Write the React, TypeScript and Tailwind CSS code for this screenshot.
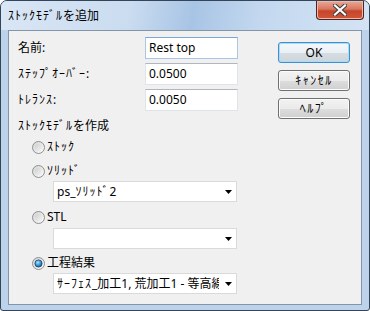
import React from "react";

const font = "font-['Noto_Sans','Noto_Sans_CJK_JP',sans-serif]";

// half-width katakana render narrower than in the reference, so space them a little
const K: React.FC<{ children: React.ReactNode; wide?: boolean }> = ({ children, wide }) => (
  <span className={wide ? "tracking-[1.5px]" : "tracking-[1px]"}>{children}</span>
);

const Radio: React.FC<{ checked?: boolean }> = ({ checked }) => (
  <svg width="13" height="13" viewBox="0 0 13 13" className="shrink-0">
    <defs>
      <linearGradient id="rOuter" x1="0" y1="0" x2="1" y2="1">
        <stop offset="0" stopColor="#d2d2d2" />
        <stop offset="1" stopColor="#fdfdfd" />
      </linearGradient>
      <linearGradient id="rInner" x1="0" y1="0" x2="1" y2="1">
        <stop offset="0" stopColor="#cfcfcf" />
        <stop offset="1" stopColor="#f4f4f4" />
      </linearGradient>
      <radialGradient id="rDot" cx="0.4" cy="0.35" r="0.7">
        <stop offset="0" stopColor="#aee6fb" />
        <stop offset="0.5" stopColor="#3aa0dc" />
        <stop offset="1" stopColor="#14528d" />
      </radialGradient>
    </defs>
    <circle cx="6.5" cy="6.5" r="6" fill="url(#rOuter)" stroke="#8e8f8f" strokeWidth="1" />
    {checked ? (
      <circle cx="6.5" cy="6.5" r="3.6" fill="url(#rDot)" stroke="#1b3f66" strokeWidth="0.8" />
    ) : (
      <circle cx="6.5" cy="6.5" r="3.6" fill="url(#rInner)" />
    )}
  </svg>
);

const Arrow = () => (
  <svg width="7" height="4" viewBox="0 0 7 4" className="shrink-0">
    <path d="M0 0 H7 L3.5 4 Z" fill="#000" />
  </svg>
);

const TextBox: React.FC<{ value: string; focus?: boolean }> = ({ value, focus }) => (
  <div
    className={
      focus
        ? "w-[93px] h-[22px] bg-white border border-[#a9c6e6] border-t-[#7ea6d2] flex items-center pl-[3px]"
        : "w-[93px] h-[22px] bg-white border border-[#dfe3ea] border-t-[#b3b6bd] flex items-center pl-[3px]"
    }
  >
    <span className="text-[12px] leading-[14px]">{value}</span>
  </div>
);

const Combo: React.FC<{ children?: React.ReactNode }> = ({ children }) => (
  <div className="w-[184px] h-[21px] bg-white border border-[#dadada] flex items-center pl-[3px] pr-[4px]">
    <span className="flex-1 text-[12px] leading-[15px] whitespace-nowrap overflow-hidden">{children}</span>
    <span className="w-[6px]" />
    <Arrow />
  </div>
);

const Button: React.FC<{ children: React.ReactNode; def?: boolean }> = ({ children, def }) => (
  <div
    className={
      def
        ? "w-[72px] h-[21px] rounded-[3px] border border-[#3c8fd1] bg-[linear-gradient(#f4f8fb_0%,#eaf0f4_50%,#d6dde3_51%,#cdd4da_100%)] shadow-[inset_0_0_0_1px_#a9dcf6] flex items-center justify-center"
        : "w-[72px] h-[21px] rounded-[3px] border border-[#707070] bg-[linear-gradient(#f2f2f2_0%,#ebebeb_50%,#dddddd_51%,#cfcfcf_100%)] shadow-[inset_0_0_0_1px_#fcfcfc] flex items-center justify-center"
    }
  >
    <span className="text-[12px] leading-[14px]">{children}</span>
  </div>
);

export default function App() {
  return (
    <div className={`${font} text-black w-[370px] h-[311px] flex flex-col border border-[#34455a] rounded-t-[7px] rounded-b-[3px] overflow-hidden bg-[#bdd3ec]`}>
      <div className="h-[29px] shrink-0 flex items-start bg-[linear-gradient(100deg,#d9e6f5_0%,#cadcf0_35%,#a8c4e5_52%,#c3d8ef_70%,#d4e3f4_100%)]">
        <span className="pl-[7px] mt-[8px] text-[12px] leading-[14px]">
          <K>ｽﾄｯｸﾓﾃﾞﾙ</K>を追加
        </span>
        <div className="flex-1" />
        <div className="mr-[5px] w-[48px] h-[19px] rounded-b-[4px] border border-t-0 border-[#50241c] bg-[linear-gradient(#e9a998_0%,#d8775f_45%,#c6442a_55%,#d0563a_100%)] shadow-[inset_0_0_0_1px_#f0b8a8] flex items-center justify-center">
          <svg width="14" height="12" viewBox="0 0 14 12">
            <path d="M2 1.5 L12 10.5 M12 1.5 L2 10.5" stroke="#3e3e3e" strokeWidth="4.2" strokeLinecap="square" />
            <path d="M2 1.5 L12 10.5 M12 1.5 L2 10.5" stroke="#ffffff" strokeWidth="2.2" strokeLinecap="square" />
          </svg>
        </div>
      </div>
      <div className="mx-[7px] h-[275px] shrink-0 border border-[#8494a9] bg-[#f0f0f0] flex text-[12px] leading-[14px]">
        <div className="w-[229px] pl-[9px] pt-[6px] flex flex-col">
          <div className="h-[22px] flex items-center">
            <span className="w-[127px]">名前:</span>
            <TextBox value="Rest top" focus />
          </div>
          <div className="mt-[4px] h-[22px] flex items-center">
            <span className="w-[127px]">
              <K>ｽﾃｯﾌﾟｵｰﾊﾞｰ</K>:
            </span>
            <TextBox value="0.0500" />
          </div>
          <div className="mt-[4px] h-[22px] flex items-center">
            <span className="w-[127px]">
              <K>ﾄﾚﾗﾝｽ</K>:
            </span>
            <TextBox value="0.0050" />
          </div>
          <div className="mt-[7px] h-[16px] flex items-center">
            <span>
              <K>ｽﾄｯｸﾓﾃﾞﾙ</K>を作成
            </span>
          </div>
          <div className="mt-[5px] h-[16px] flex items-center gap-[2px] pl-[14px]">
            <Radio />
            <K>ｽﾄｯｸ</K>
          </div>
          <div className="mt-[8px] h-[16px] flex items-center gap-[2px] pl-[14px]">
            <Radio />
            <K>ｿﾘｯﾄﾞ</K>
          </div>
          <div className="mt-[2px] pl-[35px]">
            <Combo>
              ps_<K>ｿﾘｯﾄﾞ</K>2
            </Combo>
          </div>
          <div className="mt-[7px] h-[16px] flex items-center gap-[2px] pl-[14px]">
            <Radio />
            <span>STL</span>
          </div>
          <div className="mt-[3px] pl-[35px]">
            <Combo />
          </div>
          <div className="mt-[6px] h-[16px] flex items-center gap-[2px] pl-[14px]">
            <Radio checked />
            <span>工程結果</span>
          </div>
          <div className="mt-[2px] pl-[35px]">
            <Combo>
              <K>ｻｰﾌｪｽ</K>_加工1, 荒加工1 - 等高線
            </Combo>
          </div>
        </div>
        <div className="ml-[40px] pt-[11px] flex flex-col gap-[7px]">
          <Button def>OK</Button>
          <Button>
            <K wide>ｷｬﾝｾﾙ</K>
          </Button>
          <Button>
            <K wide>ﾍﾙﾌﾟ</K>
          </Button>
        </div>
      </div>
    </div>
  );
}
